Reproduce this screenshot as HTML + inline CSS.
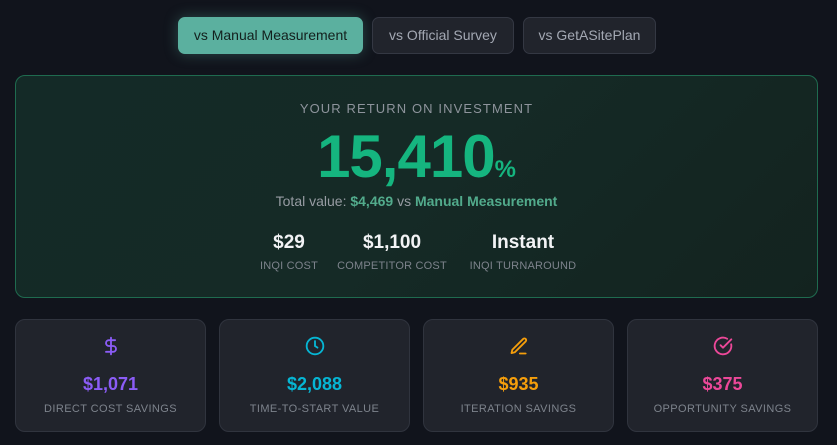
<!DOCTYPE html>
<html><head><meta charset="utf-8"><style>
*{box-sizing:border-box;margin:0;padding:0}
body{width:837px;height:445px;background:#11141c;font-family:"Liberation Sans",sans-serif;position:relative;overflow:hidden}
.btn{position:absolute;top:17px;height:37px;border-radius:7px;border:1px solid #343843;background:#21242c;color:#a3a8b3;font-size:14px;line-height:35px;text-align:center}
.btn.act{background:#5bb09f;border-color:#5bb09f;color:#13201d;box-shadow:0 0 14px rgba(91,176,159,.35)}
.main{position:absolute;left:15px;top:75px;width:803px;height:223px;border:1px solid #1f6b4f;border-radius:10px;background:linear-gradient(135deg,#142a27,#152a26 50%,#13231f);text-align:center}
.lbl{position:absolute;top:25px;left:0;right:0;font-size:13px;letter-spacing:1.1px;color:#8e949c}
.big{position:absolute;top:46px;left:0;right:0;font-size:60px;font-weight:bold;color:#15b57f;letter-spacing:-1px}
.big span{font-size:24px;letter-spacing:0}
.tv{position:absolute;top:117px;left:0;right:0;font-size:14px;color:#979ca3}
.tv b{color:#52ab8c}
.st{position:absolute;top:156px;text-align:center}
.st .v{font-size:19px;font-weight:bold;color:#f2f3f5}
.st .l{font-size:11px;color:#7d838c;margin-top:6px;letter-spacing:.2px}
.card{position:absolute;top:319px;width:191px;height:113px;border:1px solid #30343e;border-radius:10px;background:#21242c;text-align:center}
.card svg{position:absolute;left:85px;top:16px}
.card .v{position:absolute;top:54px;left:0;right:0;font-size:18px;font-weight:bold}
.card .l{position:absolute;top:83px;left:0;right:0;font-size:11px;color:#7d838c;letter-spacing:.4px}
</style></head><body>
<div class="btn act" style="left:178px;width:185px">vs Manual Measurement</div>
<div class="btn" style="left:372px;width:142px">vs Official Survey</div>
<div class="btn" style="left:523px;width:133px">vs GetASitePlan</div>
<div class="main">
<div class="lbl">YOUR RETURN ON INVESTMENT</div>
<div class="big">15,410<span>%</span></div>
<div class="tv">Total value: <b>$4,469</b> vs <b>Manual Measurement</b></div>
<div class="st" style="left:230px;width:86px"><div class="v">$29</div><div class="l">INQI COST</div></div>
<div class="st" style="left:318px;width:116px"><div class="v">$1,100</div><div class="l">COMPETITOR COST</div></div>
<div class="st" style="left:451px;width:112px"><div class="v">Instant</div><div class="l">INQI TURNAROUND</div></div>
</div>
<div class="card" style="left:15px"><svg width="20" height="20" viewBox="0 0 24 24" fill="none" stroke="#8b5cf6" stroke-width="2.2" stroke-linecap="round"><path d="M12 2v20M17 5H9.5a3.5 3.5 0 0 0 0 7h5a3.5 3.5 0 0 1 0 7H6"/></svg><div class="v" style="color:#8b5cf6">$1,071</div><div class="l">DIRECT COST SAVINGS</div></div>
<div class="card" style="left:219px"><svg width="20" height="20" viewBox="0 0 24 24" fill="none" stroke="#06b6d4" stroke-width="2.2" stroke-linecap="round"><circle cx="12" cy="12" r="10"/><path d="M12 6v6l3 2"/></svg><div class="v" style="color:#06b6d4">$2,088</div><div class="l">TIME-TO-START VALUE</div></div>
<div class="card" style="left:423px"><svg width="20" height="20" viewBox="0 0 24 24" fill="none" stroke="#f59e0b" stroke-width="2.2" stroke-linecap="round" stroke-linejoin="round"><path d="M13 21h7"/><path d="M17 3.5a2.1 2.1 0 0 1 3 3L7 19.5l-4 1 1-4z"/></svg><div class="v" style="color:#f59e0b">$935</div><div class="l">ITERATION SAVINGS</div></div>
<div class="card" style="left:627px"><svg width="20" height="20" viewBox="0 0 24 24" fill="none" stroke="#ec4899" stroke-width="2.2" stroke-linecap="round" stroke-linejoin="round"><path d="M21.8 10A10 10 0 1 1 17 3.3"/><path d="M9 11l3 3L22 4"/></svg><div class="v" style="color:#ec4899">$375</div><div class="l">OPPORTUNITY SAVINGS</div></div>
</body></html>
